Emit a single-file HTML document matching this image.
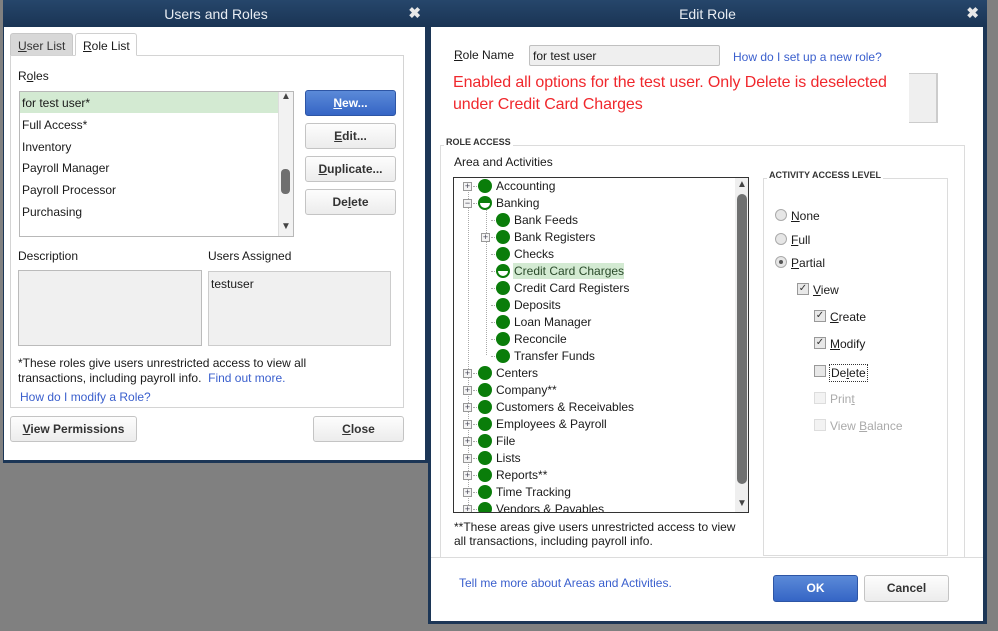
<!DOCTYPE html>
<html><head><meta charset="utf-8"><style>
*{margin:0;padding:0;box-sizing:border-box}
body{width:998px;height:631px;background:#808080;position:relative;overflow:hidden;font-family:"Liberation Sans",Arial,sans-serif;font-size:12px;color:#1a1a1a}
.a{position:absolute;white-space:nowrap}
.win{position:absolute;background:#fff;border:1px solid #1c3656}
.tb{position:absolute;left:0;right:0;top:0;height:27px;background:linear-gradient(#26466b,#1a3454);color:#e8edf3;font-size:14px;text-align:center;line-height:28px}
.x{position:absolute;right:8px;top:0;font-weight:bold;font-size:15px;color:#e8e8e8}
.btn{position:absolute;border:1px solid #c4c4c4;border-radius:3px;background:linear-gradient(#fdfdfd,#ececec);text-align:center;font-weight:bold;color:#333;line-height:24px}
.blue{background:linear-gradient(#5b8ad8,#3565c5);border-color:#2d55a5;color:#fff}
.lnk{color:#3a5fcd}
.gi{position:absolute;width:14px;height:14px;border-radius:50%;background:#0a7d0a}
.half::after{content:"";position:absolute;left:2px;top:7px;width:10px;height:5px;background:#fff;border-radius:0 0 5px 5px}
.ex{position:absolute;width:9px;height:9px;border:1px solid #999;background:#f4f4f4;font-size:9px;line-height:7px;text-align:center;color:#445}
.cb{position:absolute;width:12px;height:12px;border:1px solid #999;background:#e8e8e8;font-size:10px;line-height:10px;text-align:center;color:#333}
.rd{position:absolute;width:12px;height:12px;border:1px solid #aaa;border-radius:50%;background:#e6e6e6}
u{text-decoration:underline}
</style></head><body>

<!-- Users and Roles -->
<div class="win" style="left:3px;top:0;width:426px;height:463px;border-width:0 4px 3px 1px">
 <div class="tb" style="left:-1px;right:-4px">Users and Roles<span class="x">✖</span></div>
</div>
<div class="a" style="left:10px;top:33px;width:63px;height:23px;background:#d8d8d8;border:1px solid #c8c8c8;border-bottom:0;border-radius:3px 3px 0 0;padding:5px 0 0 7px;color:#333"><u>U</u>ser List</div>
<div class="a" style="left:10px;top:55px;width:394px;height:353px;border:1px solid #d4d4d4"></div>
<div class="a" style="left:75px;top:33px;width:62px;height:23px;background:#fff;border:1px solid #d0d0d0;border-bottom:1px solid #fff;border-radius:3px 3px 0 0;padding:5px 0 0 7px"><u>R</u>ole List</div>
<div class="a" style="left:18px;top:69px">R<u>o</u>les</div>
<div class="a" style="left:19px;top:91px;width:275px;height:146px;border:1px solid #b8b8b8;background:#fff"></div>
<div class="a" style="left:20px;top:92px;width:258px;height:21px;background:#d3ead2"></div>
<div class="a" style="left:22px;top:96px">for test user*</div>
<div class="a" style="left:22px;top:118px">Full Access*</div>
<div class="a" style="left:22px;top:140px">Inventory</div>
<div class="a" style="left:22px;top:161px">Payroll Manager</div>
<div class="a" style="left:22px;top:183px">Payroll Processor</div>
<div class="a" style="left:22px;top:205px">Purchasing</div>
<div class="a" style="left:278px;top:92px;width:15px;height:144px;background:#f2f2f2;border-left:1px solid #ddd"></div>
<div class="a" style="left:281px;top:91px;font-size:10px;color:#444">▲</div>
<div class="a" style="left:281px;top:221px;font-size:10px;color:#444">▼</div>
<div class="a" style="left:281px;top:169px;width:9px;height:25px;background:#6f6f6f;border-radius:4px"></div>
<div class="btn blue" style="left:305px;top:90px;width:91px;height:26px"><u>N</u>ew...</div>
<div class="btn" style="left:305px;top:123px;width:91px;height:26px"><u>E</u>dit...</div>
<div class="btn" style="left:305px;top:156px;width:91px;height:26px"><u>D</u>uplicate...</div>
<div class="btn" style="left:305px;top:189px;width:91px;height:26px">De<u>l</u>ete</div>
<div class="a" style="left:18px;top:249px">Description</div>
<div class="a" style="left:208px;top:249px">Users Assigned</div>
<div class="a" style="left:18px;top:270px;width:184px;height:76px;background:#f0f0f0;border:1px solid #bbb"></div>
<div class="a" style="left:208px;top:271px;width:183px;height:75px;background:#f0f0f0;border:1px solid #ccc;padding:5px 2px">testuser</div>
<div class="a" style="left:18px;top:356px">*These roles give users unrestricted access to view all</div>
<div class="a" style="left:18px;top:371px">transactions, including payroll info. <span class="lnk">&nbsp;Find out more.</span></div>
<div class="a lnk" style="left:20px;top:390px">How do I modify a Role?</div>
<div class="btn" style="left:10px;top:416px;width:127px;height:26px"><u>V</u>iew Permissions</div>
<div class="btn" style="left:313px;top:416px;width:91px;height:26px"><u>C</u>lose</div>

<!-- Edit Role -->
<div class="win" style="left:428px;top:0;width:559px;height:624px;border-width:0 4px 3px 3px">
 <div class="tb" style="left:-3px;right:-4px">Edit Role<span class="x">✖</span></div>
</div>
<div class="a" style="left:454px;top:48px"><u>R</u>ole Name</div>
<div class="a" style="left:529px;top:45px;width:191px;height:21px;background:#efefef;border:1px solid #c0c0c0;border-radius:2px;padding:3px 3px">for test user</div>
<div class="a lnk" style="left:733px;top:50px">How do I set up a new role?</div>
<div class="a" style="left:453px;top:72px;color:#f0282d;font-size:16px;line-height:22px;letter-spacing:-0.1px">Enabled all options for the test user. Only Delete is deselected<br>under Credit Card Charges</div>
<div class="a" style="left:909px;top:73px;width:29px;height:50px;background:#efefef;border:1px solid #ccc;border-width:1px 2px 1px 0"></div>
<div class="a" style="left:440px;top:145px;width:525px;height:413px;border:1px solid #dcdcdc"></div>
<div class="a" style="left:444px;top:137px;background:#fff;padding:0 2px;font-size:9px;font-weight:bold;color:#333">ROLE ACCESS</div>
<div class="a" style="left:454px;top:155px">Area and Activities</div>
<div class="a" style="left:453px;top:177px;width:296px;height:336px;border:1px solid #333;background:#fff;overflow:hidden" id="tree">
 <div class="a" style="left:281px;top:0;width:14px;height:334px;background:#efefef"></div>
 <div class="a" style="left:283px;top:1px;font-size:10px;color:#444">▲</div>
 <div class="a" style="left:283px;top:320px;font-size:10px;color:#444">▼</div>
 <div class="a" style="left:283px;top:16px;width:10px;height:290px;background:#6f7070;border-radius:5px"></div>
 <div class="a" style="left:14px;top:9px;height:330px;border-left:1px dotted #aaa"></div>
 <div class="a" style="left:32px;top:27px;height:150px;border-left:1px dotted #aaa"></div>
</div>
<div class="a" style="left:454px;top:520px">**These areas give users unrestricted access to view</div>
<div class="a" style="left:454px;top:534px">all transactions, including payroll info.</div>
<div class="a" style="left:763px;top:178px;width:185px;height:378px;border:1px solid #dcdcdc"></div>
<div class="a" style="left:767px;top:170px;background:#fff;padding:0 2px;font-size:9px;font-weight:bold;color:#333">ACTIVITY ACCESS LEVEL</div>
<div class="rd" style="left:775px;top:209px"></div><div class="a" style="left:791px;top:209px"><u>N</u>one</div>
<div class="rd" style="left:775px;top:233px"></div><div class="a" style="left:791px;top:233px"><u>F</u>ull</div>
<div class="rd" style="left:775px;top:256px"><div style="position:absolute;left:3px;top:3px;width:4px;height:4px;border-radius:50%;background:#555"></div></div><div class="a" style="left:791px;top:256px"><u>P</u>artial</div>
<div class="cb" style="left:797px;top:283px">✓</div><div class="a" style="left:813px;top:283px"><u>V</u>iew</div>
<div class="cb" style="left:814px;top:310px">✓</div><div class="a" style="left:830px;top:310px"><u>C</u>reate</div>
<div class="cb" style="left:814px;top:337px">✓</div><div class="a" style="left:830px;top:337px"><u>M</u>odify</div>
<div class="cb" style="left:814px;top:365px"></div><div class="a" style="left:829px;top:364px;border:1px dotted #333;padding:1px 1px">De<u>l</u>ete</div>
<div class="cb" style="left:814px;top:392px;border-color:#ddd;background:#f3f3f3"></div><div class="a" style="left:830px;top:392px;color:#aaa">Prin<u>t</u></div>
<div class="cb" style="left:814px;top:419px;border-color:#ddd;background:#f3f3f3"></div><div class="a" style="left:830px;top:419px;color:#aaa">View <u>B</u>alance</div>
<div class="a" style="left:431px;top:557px;width:552px;border-top:1px solid #dcdcdc"></div>
<div class="a lnk" style="left:459px;top:576px">Tell me more about Areas and Activities.</div>
<div class="btn blue" style="left:773px;top:575px;width:85px;height:27px">OK</div>
<div class="btn" style="left:864px;top:575px;width:85px;height:27px">Cancel</div>

<script>
var rows=[["Accounting",0,"+"],["Banking",0,"-",1],["Bank Feeds",1],["Bank Registers",1,"+"],["Checks",1],["Credit Card Charges",1,0,1,1],["Credit Card Registers",1],["Deposits",1],["Loan Manager",1],["Reconcile",1],["Transfer Funds",1],["Centers",0,"+"],["Company**",0,"+"],["Customers & Receivables",0,"+"],["Employees & Payroll",0,"+"],["File",0,"+"],["Lists",0,"+"],["Reports**",0,"+"],["Time Tracking",0,"+"],["Vendors & Payables",0,"+"]];
var t=document.getElementById('tree'),h='';
rows.forEach(function(r,i){var y=-1+i*17,l=r[1]*18;
 if(r[2])h+='<div class="ex" style="left:'+(9+l)+'px;top:'+(y+5)+'px">'+(r[2]=='+'?'+':'−')+'</div>';
 h+='<div class="a" style="left:'+(19+l)+'px;top:'+(y+9)+'px;width:6px;border-top:1px dotted #aaa"></div>';
 h+='<div class="gi'+(r[3]?' half':'')+'" style="left:'+(24+l)+'px;top:'+(y+2)+'px"></div>';
 if(r[4])h+='<div class="a" style="left:'+(41+l)+'px;top:'+(y+1)+'px;width:111px;height:16px;background:#d3ead2"></div>';
 h+='<div class="a" style="left:'+(42+l)+'px;top:'+(y+2)+'px;'+(r[4]?'color:#2a4a2a':'')+'">'+r[0].replace('&','&amp;')+'</div>';});
t.insertAdjacentHTML('beforeend',h);
</script>
</body></html>
